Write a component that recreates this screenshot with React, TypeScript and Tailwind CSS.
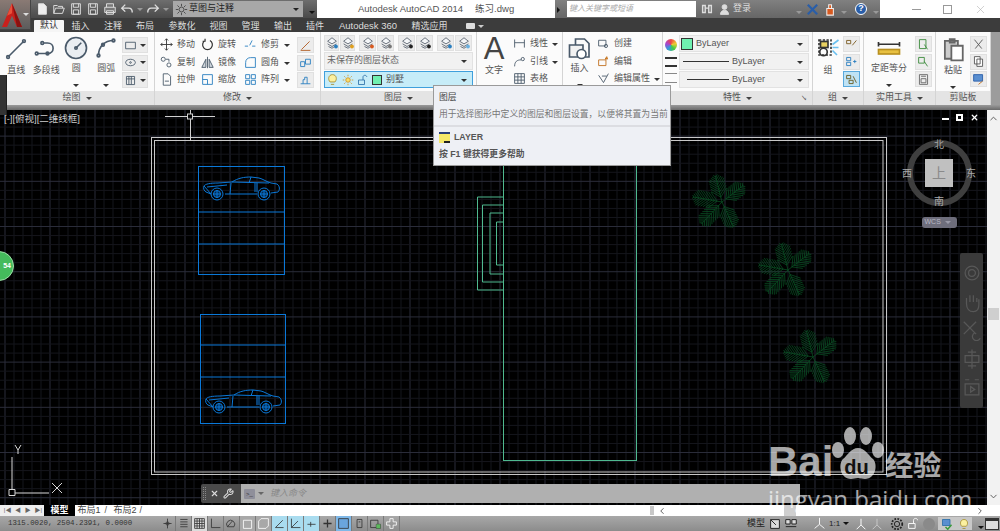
import type { ReactNode } from 'react';
import { ChevronDown, ChevronLeft, ChevronRight, ChevronUp, Wrench, X } from 'lucide-react';

// generic 16x16 line icon
function Ico({ children, s = 16, c = '#4a5a6a', w = 1.1 }: { children: ReactNode; s?: number; c?: string; w?: number }) {
  return (
    <svg width={s} height={s} viewBox="0 0 16 16" fill="none" stroke={c} strokeWidth={w} className="shrink-0">
      {children}
    </svg>
  );
}

function Caret({ c = 'border-t-[#333]' }: { c?: string }) {
  return <span className={`inline-block w-0 h-0 shrink-0 border-x-[3px] border-t-[3px] border-x-transparent ${c}`} />;
}

function Panel({ w, title, caret = true, corner, children }: { w: string; title: string; caret?: boolean; corner?: boolean; children: ReactNode }) {
  return (
    <div className={`${w} shrink-0 flex flex-col bg-[#fbfbfb] border-r border-[#d4d4d4]`}>
      <div className="h-[59px] flex">{children}</div>
      <div className="h-[14px] bg-[#e4e4e4] flex items-center justify-center gap-[5px] text-[9px] text-[#555] relative">
        {title}
        {caret && <Caret c="border-t-[#444]" />}
        {corner && <span className="absolute right-[5px] text-[6px] text-[#555]">↘</span>}
      </div>
    </div>
  );
}

function BigTool({ label, icon, w, caret }: { label: string; icon: ReactNode; w: string; caret?: boolean }) {
  return (
    <div className={`${w} flex flex-col items-center pt-[4px] text-[9px] text-[#555]`}>
      <div className="h-[26px] flex items-center justify-center">{icon}</div>
      <span className="leading-[13px] mt-[2px] whitespace-nowrap">{label}</span>
      {caret && <span className="mt-[3px]"><Caret /></span>}
    </div>
  );
}

function Row({ icon, label, caret, w }: { icon: ReactNode; label: string; caret?: boolean; w: string }) {
  return (
    <div className={`${w} h-[17.5px] flex items-center gap-[4px] text-[9px] text-[#555] whitespace-nowrap`}>
      {icon}
      <span>{label}</span>
      {caret && <span className="ml-auto mr-[2px]"><Caret /></span>}
    </div>
  );
}

function Sq({ children, on, caret, w = 'w-[17px]' }: { children: ReactNode; on?: boolean; caret?: boolean; w?: string }) {
  return (
    <div className={`${w} h-[16px] flex items-center justify-center gap-[3px] border ${on ? 'bg-[#bfe3f5] border-[#5aa9dc]' : 'bg-[#ececec] border-[#e0e0e0]'}`}>
      {children}
      {caret && <Caret />}
    </div>
  );
}

function Drop({ children, on, h = 'h-[17px]' }: { children: ReactNode; on?: boolean; h?: string }) {
  return (
    <div className={`${h} flex items-center pl-[1px] pr-[5px] gap-[3px] border text-[9px] text-[#555] ${on ? 'bg-[#c6ecf8] border-[#3f9fdc]' : 'bg-[#f1f1f1] border-[#e2e2e2]'}`}>
      {children}
      <span className="ml-auto"><Caret /></span>
    </div>
  );
}

// stacked sheets with a small marker, used by the layer tool row
const LayerIco = ({ accent = '#2a7fc0' }: { accent?: string }) => (
  <Ico s={14} c="#5a6470" w={1}>
    <path d="M3 6l5-4 5 4-5 3z" fill="#f4f6f8" />
    <path d="M3 9l5 3 5-3M4 12l4 2 3-2" />
    <circle cx="12.5" cy="12" r="2.2" fill={accent} stroke="none" />
  </Ico>
);

// feathered plant symbol from the drawing
function frondPath(cx: number, cy: number) {
  let d = '';
  for (const [deg, R] of [[-104, 27], [-38, 27], [65, 27], [133, 30], [190, 29]]) {
    const a = (deg * Math.PI) / 180;
    const ex = cx + R * Math.cos(a);
    const ey = cy + R * Math.sin(a);
    d += `M${cx} ${cy}L${ex.toFixed(1)} ${ey.toFixed(1)}`;
    for (let t = 5; t < R; t += 2.6) {
      const px = cx + t * Math.cos(a);
      const py = cy + t * Math.sin(a);
      const len = Math.min(11, (R - t) * 0.8 + 2);
      for (const side of [-0.8, 0.8]) {
        d += `M${px.toFixed(1)} ${py.toFixed(1)}L${(px + len * Math.cos(a + side)).toFixed(1)} ${(py + len * Math.sin(a + side)).toFixed(1)}`;
      }
    }
  }
  return d;
}

function Car({ x, y }: { x: number; y: number }) {
  return (
    <g transform={`translate(${x} ${y})`} stroke="#0a78d8" strokeWidth="1" fill="none">
      <path d="M1 9C2 7 7 6 15 6L29 5C35 1 41 0 48 0L56 1C60 2 64 5 68 6L74 7C77 9 77 13 75 15L68 16M54 17L22 17M8 17L3 15C1 14 0 11 1 9Z" />
      <path d="M29 5L66 6M28 6L27 17M48 0L46 6M52 6L52 15M54 6L54 15M4 10L24 8" />
      <circle cx="14" cy="17" r="6" />
      <circle cx="14" cy="17" r="3.5" fill="#052a50" />
      <circle cx="61" cy="17" r="6" />
      <circle cx="61" cy="17" r="3.5" fill="#052a50" />
      <path d="M14 13V21M10 17H18M61 13V21M57 17H65" />
    </g>
  );
}

function Canvas() {
  const minorX = Array.from({ length: 111 }, (_, i) => 5 + i * 9);
  const minorY = Array.from({ length: 46 }, (_, i) => 109 + i * 9.04);
  return (
    <svg viewBox="0 110 987 395" className="absolute inset-0 w-full h-full">
      {minorX.map((x, i) => (
        <line key={x} x1={x} x2={x} y1="110" y2="505" stroke={i % 5 === 0 ? '#2b2d3a' : '#15161c'} />
      ))}
      {minorY.map((y, i) => (
        <line key={y} y1={y} y2={y} x1="0" x2="987" stroke={(i - 1) % 5 === 2 ? '#2b2d3a' : '#15161c'} />
      ))}
      <rect x="151.5" y="137.5" width="735" height="337" fill="none" stroke="#c8c8c8" />
      <rect x="154.5" y="140.5" width="728.5" height="331.5" fill="none" stroke="#c8c8c8" />
      <g fill="none" stroke="#0a78d8">
        <rect x="198.5" y="166.5" width="86" height="108" />
        <path d="M199 212H285M199 244H285" />
        <rect x="200.5" y="314.5" width="85" height="109" />
        <path d="M200 345H286M200 377H286" />
      </g>
      <Car x={203} y={177} />
      <Car x={205} y={390} />
      <g fill="none" stroke="#4fb98f">
        <rect x="503.5" y="140" width="133" height="320.5" />
        <path d="M503 197H477.5V290H503M503 205H482.5V282H503M503 213H490V274H503M503 222H496.5V265H503" />
      </g>
      <g fill="none" stroke="#0a5224" strokeWidth="0.75">
        <path d={frondPath(722, 202)} />
        <path d={frondPath(788, 270)} />
        <path d={frondPath(813, 357)} />
      </g>
      {/* crosshair */}
      <path d="M165 116.5H187M193 116.5H215M190.5 110V114M190.5 119V141" stroke="#d0d0d0" fill="none" />
      <rect x="187.5" y="114" width="5" height="5" stroke="#d0d0d0" fill="none" />
      {/* UCS */}
      <path d="M12 457V490M15 493H49M9 489.5h6v6h-6zM15 445l3 5 3-5M18 450v4M52 483l10 10M62 483l-10 10" stroke="#d8d8d8" fill="none" />
    </svg>
  );
}

function Compass() {
  return (
    <div className="absolute left-[905px] top-[28px] w-[68px] flex flex-col items-center">
      <div className="relative w-[68px] h-[70px] flex items-center justify-center text-[#a8a8a8] text-[10px]">
        <div className="w-[65px] h-[66px] rounded-full border-[6px] border-[#3f3f3f] flex items-center justify-center">
          <div className="w-[28px] h-[28px] bg-[#c0c0c0] flex items-center justify-center text-[14px] text-[#8a8a8a]">上</div>
        </div>
        <span className="absolute top-[-1px]">北</span>
        <span className="absolute bottom-[-1px]">南</span>
        <span className="absolute left-[-3px]">西</span>
        <span className="absolute right-[-3px]">东</span>
      </div>
      <div className="mt-[9px] w-[35px] h-[11px] rounded-[3px] bg-[#6e6e7c] text-[7px] text-[#b8b8c4] flex items-center pl-[3px] gap-[4px]">
        WCS
        <Caret c="border-t-[#9a9aa8]" />
      </div>
    </div>
  );
}

function NavBar() {
  return (
    <div className="absolute left-[960px] top-[143px] w-[23px] h-[155px] rounded-[2px] bg-[#3a3a3a] flex flex-col items-center justify-around py-[6px]">
      {[
        <path key="a" d="M3 8a5 5 0 1 0 10 0a5 5 0 1 0-10 0M5.5 8a2.5 2.5 0 1 0 5 0a2.5 2.5 0 1 0-5 0" />,
        <path key="b" d="M4 9V5M6.5 8V3M9 8V3M11.5 8V5M4 9c0 4 2 6 5 6s4-2 4-5V6" />,
        <path key="c" d="M2 2l9 9M11 2L2 11M10 10a3 3 0 1 0 4 4" />,
        <path key="d" d="M8 1v14M3 5.5h10v5H3zM5 3h6M5 13h6" />,
        <path key="e" d="M3 5h10v8H3zM7 7l3 2-3 2zM3 2h3M10 2h3" />,
      ].map((p) => (
        <Ico key={p.key} s={22} c="#585858" w={0.9}>
          {p}
        </Ico>
      ))}
    </div>
  );
}

function Watermark() {
  return (
    <div className="absolute left-[768px] top-[424px] w-[180px] text-white/65 pointer-events-none font-['Liberation_Sans','Noto_Sans_CJK_SC',sans-serif]">
      <div className="flex items-end h-[57px]">
        <span className="text-[42px] leading-[38px] font-bold">Bai</span>
        <span className="relative w-[54px] h-[57px] shrink-0 -ml-[2px]">
          <svg viewBox="0 0 54 57" className="absolute inset-0 w-full h-full" fill="currentColor">
            <ellipse cx="19" cy="12" rx="6" ry="9" />
            <ellipse cx="35" cy="12" rx="6" ry="9" />
            <ellipse cx="7" cy="26" rx="6" ry="8" />
            <ellipse cx="47" cy="26" rx="6" ry="8" />
            <path d="M27 24c7 0 10 7 15 11c5 5 3 20-8 20c-3 0-4-1-7-1s-4 1-7 1c-11 0-13-15-8-20c5-4 8-11 15-11z" />
          </svg>
          <span className="absolute left-[13px] bottom-[4px] text-[20px] leading-[20px] font-bold text-[#111]">du</span>
        </span>
        <span className="text-[28px] leading-[34px] font-bold font-['Noto_Sans_CJK_SC',sans-serif]">经验</span>
      </div>
      <div className="text-[24px] leading-[26px] mt-[5px] whitespace-nowrap font-['Open_Sans',sans-serif]">jingyan.baidu.com</div>
    </div>
  );
}

function Tooltip() {
  return (
    <div className="absolute left-[433px] top-[85px] w-[238px] h-[81px] bg-[#eef0f5] border border-[#9a9a9a] text-[#555] z-10 text-[8.8px]">
      <div className="px-[5px] pt-[5px] h-[41px] border-b-2 border-[#dcdde2]">
        <div className="leading-[12px] text-[#444]">图层</div>
        <div className="leading-[12px] mt-[5px] text-[#777] whitespace-nowrap">用于选择图形中定义的图层和图层设置，以便将其置为当前</div>
      </div>
      <div className="px-[5px] pt-[4px]">
        <div className="flex items-center gap-[4px] font-bold leading-[12px]">
          <svg width="11" height="11" viewBox="0 0 11 11" className="shrink-0">
            <rect width="11" height="11" fill="#f6e96a" />
            <rect width="11" height="2" fill="#2a3f7a" />
            <rect y="9" x="5" width="6" height="2" fill="#222" />
          </svg>
          LAYER
        </div>
        <div className="font-bold leading-[12px] mt-[5px]">按 F1 键获得更多帮助</div>
      </div>
    </div>
  );
}

const statusIcons = [
  { d: 'M8 2v12M3 8h10M8 8m-2 0a2 2 0 1 0 4 0a2 2 0 1 0-4 0' },
  { d: 'M4 3h9M4 6h9M4 9h9M4 12h9' },
  { d: 'M2 2h12v12H2zM2 5h12M2 8h12M2 11h12M5 2v12M8 2v12M11 2v12', bg: 'bg-[#dcdcdc]' },
  { d: 'M3 2v11h11' },
  { d: 'M3 12a5 5 0 1 1 8 0zM9 5l-6 7' },
  { d: 'M3 4h10v10H3z', white: true, bg: 'bg-[#a8a8a8]' },
  { d: 'M5 2h9v9l-3 3H2V5z', white: true, bg: 'bg-[#a8a8a8]' },
  { d: 'M3 13L12 4M3 13h10', bg: 'bg-[#a9dcef]' },
  { d: 'M3 2v11h11M3 13l8-8', bg: 'bg-[#a9dcef]' },
  { d: 'M3 9h10M7 6v6', bg: 'bg-[#a9dcef]' },
  { d: 'M8 3v10M3 8h10', w: 1.6 },
  { d: 'M2 2h12v12H2z', bg: 'bg-[#7fb8e8]', fill: '#6aa5dd' },
  { d: 'M5 3h6v10H5zM7 6h2' },
  { d: 'M2 4h9v9H2zM9 9h5v5H9z', accent: true },
  { d: 'M6 2h4v4h4v4h-4v4H6v-4H2V6h4z', white: true },
];

export default function App() {
  return (
    <div className="relative w-full h-screen flex flex-col overflow-hidden bg-black font-['Liberation_Sans','Noto_Sans_CJK_SC',sans-serif]">
      {/* title bar */}
      <div className="h-[18px] flex shrink-0">
        <div className="w-[317px] pl-[35px] bg-gradient-to-b from-[#6e6e6e] to-[#4a4a4a] flex items-center gap-[3px]">
          <Ico s={14} c="#ddd"><path d="M4 2h6l3 3v9H4z" fill="#eee" /></Ico>
          <Ico s={14} c="#ddd"><path d="M2 13V4h4l1 1h5v2M2 13l2-6h10l-2 6z" /></Ico>
          <Ico s={14} c="#ddd"><path d="M3 2h10v12H3zM5 2v4h6V2M5 9h6v5H5z" /></Ico>
          <Ico s={14} c="#ddd"><path d="M3 2h10v12H3zM5 2v4h6V2M5 9h6v5H5z" /></Ico>
          <Ico s={14} c="#ddd"><path d="M4 6V2h8v4M2 6h12v6H2zM4 10h8v4H4z" fill="#777" /></Ico>
          <Ico s={14} c="#ddd" w={1.6}><path d="M6 3L2 7l4 4M2 7h8c3 0 4 2 4 5" /></Ico>
          <Caret c="border-t-[#999]" />
          <Ico s={14} c="#ddd" w={1.6}><path d="M10 3l4 4-4 4M14 7H6c-3 0-4 2-4 5" /></Ico>
          <Caret c="border-t-[#999]" />
          <div className="ml-[1px] w-[130px] h-[16px] bg-[#a8a8a8] flex items-center gap-[1px] pl-[2px] pr-[4px] text-[9px] text-[#222]">
            <Ico s={13} c="#444"><path d="M8 5a3 3 0 1 0 0 6a3 3 0 1 0 0-6M8 1v3M8 12v3M1 8h3M12 8h3M3 3l2 2M11 11l2 2M13 3l-2 2M5 11l-2 2" /></Ico>
            草图与注释
            <span className="ml-auto"><Caret c="border-t-[#222]" /></span>
          </div>
          <div className="ml-[3px]"><Caret c="border-t-[#111]" /></div>
        </div>
        <div className="w-[238px] bg-white flex items-center pl-[41px] gap-[12px] text-[9.5px] text-[#555] whitespace-nowrap">
          <span>Autodesk AutoCAD 2014</span>
          <span>练习.dwg</span>
        </div>
        <div className="flex-1 bg-gradient-to-b from-[#808080] to-[#666] flex items-center">
          <span className="ml-[2px]"><span className="inline-block w-0 h-0 border-y-[3px] border-l-[3px] border-y-transparent border-l-[#111] align-middle" /></span>
          <div className="ml-[7px] w-[129px] h-[16px] bg-white text-[8px] italic text-[#aaa] flex items-center pl-[2px]">键入关键字或短语</div>
          <span className="ml-[4px]"><Ico s={14} c="#ddd" w={1.6}><path d="M3 4h3v8H3zM10 4h3v8h-3zM6 7h4" /></Ico></span>
          <span className="ml-[4px]"><Ico s={13} c="#ddd"><path d="M8 2a3 3 0 1 0 0 6a3 3 0 1 0 0-6M3 14c0-3 2-5 5-5s5 2 5 5z" fill="#ddd" /></Ico></span>
          <span className="ml-[2px] text-[9px] text-[#ddd]">登录</span>
          <span className="ml-[45px]"><Caret c="border-t-[#999]" /></span>
          <span className="ml-[3px]"><Ico s={15} c="#2a5ea8" w={2.4}><path d="M3 3l10 10M13 3L3 13" /></Ico></span>
          <span className="ml-[4px]"><Ico s={15} c="#eee"><path d="M3 7h7v7H3zM5 7V3h3v4" fill="#d85a20" /></Ico></span>
          <span className="ml-[2px]"><Caret c="border-t-[#999]" /></span>
          <span className="ml-[8px] w-[12px] h-[12px] rounded-full bg-[#2a5ea8] border border-white text-white text-[9px] font-bold flex items-center justify-center">?</span>
          <span className="ml-[6px]"><Caret c="border-t-[#999]" /></span>
        </div>
        <div className="w-[120px] bg-white flex items-center text-[#aaa] text-[13px] pl-[32px] gap-[22px]">
          <span className="block w-[9px] h-px bg-[#999]" />
          <span className="block w-[9px] h-[9px] border border-[#999]" />
          <X size={13} strokeWidth={1} />
        </div>
      </div>

      {/* tabs */}
      <div className="h-[14px] shrink-0 bg-[#3c3c3c] flex pl-[34px] items-end text-[9px] text-[#ddd] whitespace-nowrap">
        <div className="w-[30px] h-[12px] bg-[#f5f5f5] text-[#333] flex items-center justify-center rounded-t-[1px]">默认</div>
        <div className="w-[33px] text-center leading-[12px]">插入</div>
        <div className="w-[32px] text-center leading-[12px]">注释</div>
        <div className="w-[32px] text-center leading-[12px]">布局</div>
        <div className="w-[42px] text-center leading-[12px]">参数化</div>
        <div className="w-[31px] text-center leading-[12px]">视图</div>
        <div className="w-[33px] text-center leading-[12px]">管理</div>
        <div className="w-[32px] text-center leading-[12px]">输出</div>
        <div className="w-[32px] text-center leading-[12px]">插件</div>
        <div className="w-[74px] text-center leading-[12px] text-[9.5px]">Autodesk 360</div>
        <div className="w-[49px] text-center leading-[12px]">精选应用</div>
        <div className="ml-[12px] h-[12px] flex items-center gap-[3px]">
          <span className="block w-[9px] h-[6px] bg-[#ddd] rounded-[1px]" />
          <Caret c="border-t-[#ccc]" />
        </div>
      </div>

      {/* ribbon */}
      <div className="h-[73px] shrink-0 flex bg-[#9c9c9c]">
        <Panel w="w-[155px]" title="绘图">
          <div className="flex pl-[2px] w-[122px]">
            <BigTool w="w-[29px]" label="直线" icon={<Ico s={24}><path d="M3 13L13 3" /><circle cx="2.7" cy="13.3" r=".9" /><circle cx="13.3" cy="2.7" r=".9" /></Ico>} />
            <BigTool w="w-[32px]" label="多段线" icon={<Ico s={24}><path d="M2 11h7c5 0 5-7 0-7H6" /><circle cx="1.8" cy="11" r=".9" /><circle cx="9" cy="11" r=".9" /><circle cx="5.5" cy="4" r=".9" /></Ico>} />
            <BigTool w="w-[29px]" caret label="圆" icon={<Ico s={24}><circle cx="8" cy="8" r="7" fill="#e9edf1" /><path d="M8 8l3.5-3.5" /><circle cx="8" cy="8" r=".8" /></Ico>} />
            <BigTool w="w-[32px]" caret label="圆弧" icon={<Ico s={24}><path d="M3 13C3 7 7 3 13 3" /><circle cx="3" cy="13" r=".9" /><circle cx="13" cy="3" r=".9" /><circle cx="6" cy="5.8" r=".9" /></Ico>} />
          </div>
          <div className="flex flex-col gap-[1.5px] pt-[5px]">
            <Sq w="w-[26px]" caret><Ico s={13}><path d="M2 4h12v8H2z" /></Ico></Sq>
            <Sq w="w-[26px]" caret><Ico s={13}><ellipse cx="8" cy="8" rx="6" ry="4" /><circle cx="8" cy="8" r="1" /></Ico></Sq>
            <Sq w="w-[26px]" caret><Ico s={13}><path d="M3 3h10v10H3zM3 6h10M6 3v10M9 3v10" /></Ico></Sq>
          </div>
        </Panel>
        <Panel w="w-[166px]" title="修改">
          <div className="flex flex-col pt-[4px] w-[43px] pl-[5px]">
            <Row w="w-[40px]" label="移动" icon={<Ico s={13} c="#333"><path d="M8 1v14M1 8h14M6 3l2-2 2 2M6 13l2 2 2-2M3 6L1 8l2 2M13 6l2 2-2 2" /></Ico>} />
            <Row w="w-[40px]" label="复制" icon={<Ico s={13}><circle cx="4" cy="4" r="2.5" /><circle cx="11" cy="11" r="2.5" /><path d="M7 4h4v3" /></Ico>} />
            <Row w="w-[40px]" label="拉伸" icon={<Ico s={13}><path d="M4 1h6l3 3v11H4zM6 10h5" /></Ico>} />
          </div>
          <div className="flex flex-col pt-[4px] w-[43px] pl-[3px]">
            <Row w="w-[40px]" label="旋转" icon={<Ico s={13} c="#333" w={1.5}><path d="M5 3a6 6 0 1 0 6 0M5 1v3H2" /></Ico>} />
            <Row w="w-[40px]" label="镜像" icon={<Ico s={13}><path d="M8 1v14M6 4L1 14h5zM10 4l5 10h-5z" fill="#cfd6dd" /></Ico>} />
            <Row w="w-[40px]" label="缩放" icon={<Ico s={13} c="#2a7fc0"><path d="M2 2h12v12H2z" /><path d="M2 8h6v6" /></Ico>} />
          </div>
          <div className="flex flex-col pt-[4px] w-[53px] pl-[3px]">
            <Row w="w-[48px]" caret label="修剪" icon={<Ico s={13} c="#2a7fc0"><path d="M1 10h4M7 9l3-6M10 10h4" /></Ico>} />
            <Row w="w-[48px]" caret label="圆角" icon={<Ico s={13} c="#2a7fc0"><path d="M2 14V8c0-4 3-6 6-6h6v12z" /></Ico>} />
            <Row w="w-[48px]" caret label="阵列" icon={<Ico s={13} c="#2a7fc0"><path d="M2 2h5v5H2zM9 2h5v5H9zM2 9h5v5H2zM9 9h5v5H9z" /></Ico>} />
          </div>
          <div className="flex flex-col gap-[1.5px] pt-[5px] ml-[3px]">
            <Sq><Ico s={13} c="#b05a20"><path d="M3 13L13 3M2 14h12" /></Ico></Sq>
            <Sq><Ico s={13} c="#2a7fc0"><path d="M2 7h5v6H2zM8 4h6v6H8z" /></Ico></Sq>
            <Sq><Ico s={13} c="#2a7fc0"><path d="M2 12h12M5 12V7h2V4h3v8" /></Ico></Sq>
          </div>
        </Panel>
        <Panel w="w-[156px]" title="图层">
          <div className="w-full px-[3px] pt-[3px] flex flex-col gap-[1px]">
            <div className="h-[16px] flex gap-[4px]">
              <div className="flex gap-px"><Sq w="w-[15px]"><LayerIco /></Sq><Sq w="w-[15px]"><LayerIco accent="#e0a020" /></Sq></div>
              <div className="flex gap-px"><Sq w="w-[17px]"><LayerIco accent="#d85a20" /></Sq><Sq w="w-[17px]"><LayerIco accent="#777" /></Sq></div>
              <div className="flex gap-px"><Sq w="w-[17px]"><LayerIco accent="#222" /></Sq><Sq w="w-[17px]"><LayerIco accent="#222" /></Sq></div>
              <div className="flex gap-px"><Sq w="w-[17px]"><LayerIco /></Sq><Sq w="w-[17px]"><LayerIco accent="#6ab0e0" /></Sq></div>
            </div>
            <Drop h="h-[18px]"><span className="ml-[1px] text-[9px] text-[#666]">未保存的图层状态</span></Drop>
            <Drop on h="h-[17px]">
              <Ico s={13} c="#a89030"><path d="M5 11c-3-3-2-9 3-9s6 6 3 9zM6 14h4" fill="#fbf0a0" /></Ico>
              <Ico s={12} c="#d09020"><circle cx="8" cy="8" r="3" fill="#f8e070" /><path d="M8 1v2M8 13v2M1 8h2M13 8h2M3 3l1.5 1.5M11.5 11.5L13 13M13 3l-1.5 1.5M3 13l1.5-1.5" /></Ico>
              <Ico s={12} c="#2a6fa8"><path d="M2 8h8v6H2zM8 8V4c0-3 5-3 5 0" /></Ico>
              <span className="w-[10px] h-[10px] bg-[#6ff0b0] border border-[#333] shrink-0" />
              <span className="ml-[1px] text-[#555]">别墅</span>
            </Drop>
          </div>
        </Panel>
        <Panel w="w-[86px]" title="注释">
          <BigTool w="w-[34px]" caret label="文字" icon={<span className="text-[31px] leading-[26px] text-[#444]">A</span>} />
          <div className="flex flex-col pt-[3px] pl-[2px]">
            <Row w="w-[44px]" caret label="线性" icon={<Ico s={13}><path d="M2 3v10M14 3v10M2 7h12" /></Ico>} />
            <Row w="w-[44px]" caret label="引线" icon={<Ico s={13}><path d="M2 14c0-6 3-8 8-8" /><circle cx="12" cy="5" r="2" /></Ico>} />
            <Row w="w-[44px]" label="表格" icon={<Ico s={13}><path d="M2 2h12v12H2zM2 6h12M2 10h12M6 2v12M10 2v12" /></Ico>} />
          </div>
        </Panel>
        <Panel w="w-[100px]" title="块">
          <BigTool w="w-[33px]" caret label="插入" icon={<Ico s={24}><path d="M5 6V2h6l3 3v9H9" /><path d="M1 6h9v8H1z" fill="#f2f2f2" /><circle cx="9" cy="12" r="3" fill="#fff" /></Ico>} />
          <div className="flex flex-col pt-[3px] pl-[1px]">
            <Row w="w-[60px]" label="创建" icon={<Ico s={13}><path d="M2 4h9v7H2z" /><circle cx="11" cy="11" r="2" /></Ico>} />
            <Row w="w-[60px]" label="编辑" icon={<Ico s={13} c="#c07020"><path d="M2 6h9v7H2z" /><path d="M12 2l1 3-3 0z" fill="#e09030" /></Ico>} />
            <Row w="w-[60px]" caret label="编辑属性" icon={<Ico s={13}><path d="M2 4l6 9 6-11M6 5h6" /></Ico>} />
          </div>
        </Panel>
        <Panel w="w-[150px]" title="特性" corner>
          <div className="flex flex-col w-[16px] pt-[7px] pl-[2px] gap-[6px]">
            <span className="block w-[12px] h-[12px] rounded-full bg-[conic-gradient(#e44,#ec3,#4c4,#39d,#a4c,#e44)]" />
            <span className="block w-[12px] h-[10px] border-y-2 border-[#333]" />
            <span className="block w-[12px] h-[10px] border-y border-[#888]" />
          </div>
          <div className="w-[130px] flex flex-col pt-[3px] gap-px">
            <Drop h="h-[17px]"><span className="w-[12px] h-[12px] bg-[#6ff0b0] border border-[#333] shrink-0" />ByLayer</Drop>
            <Drop h="h-[17px]"><span className="w-[46px] h-px bg-[#333] ml-[2px]" />ByLayer</Drop>
            <Drop h="h-[17px]"><span className="w-[42px] h-px bg-[#333] ml-[6px]" />ByLayer</Drop>
          </div>
        </Panel>
        <Panel w="w-[51px]" title="组">
          <BigTool w="w-[30px]" label="组" icon={<Ico s={24} c="#333"><path d="M2 2h8v10H2z" strokeDasharray="1.5 1" /><rect x="3" y="3" width="5" height="4" fill="#e8d060" /><circle cx="5" cy="10" r="2.5" /><path d="M11 5l4-3M11 7h4M11 9l3 3" stroke="#6ac0f0" /></Ico>} />
          <div className="flex flex-col gap-[1.5px] pt-[4px]">
            <Sq><Ico s={13} c="#7a5a20"><path d="M2 3h5v4H2zM9 9l5-6" /></Ico></Sq>
            <Sq><Ico s={13} c="#2a7fc0"><path d="M2 3h5v4H2zM2 9h5v4H2zM10 8h4M12 6v4" /></Ico></Sq>
            <Sq on><Ico s={13} c="#6a5a20"><path d="M2 3h5v4H2zM5 9h5v4H5zM10 4l4 8" /></Ico></Sq>
          </div>
        </Panel>
        <Panel w="w-[72px]" title="实用工具">
          <BigTool w="w-[50px]" caret label="定距等分" icon={<Ico s={24} c="#333"><path d="M1 4v3M15 4v3M1 5.5h14" /><rect x="1" y="9" width="14" height="3" fill="#e8c040" stroke="#b89020" /></Ico>} />
          <div className="flex flex-col gap-[1.5px] pt-[4px] ml-[1px]">
            <Sq><Ico s={13} c="#3a8a3a"><path d="M3 2h8v11H3zM9 8l4 6" /></Ico></Sq>
            <Sq><Ico s={13} c="#3a8a3a"><path d="M2 3h7v7H2zM9 8l4 6" /></Ico></Sq>
            <Sq><Ico s={13} c="#666"><path d="M3 2h10v12H3zM5 4h6M5 7h6v5H5z" /></Ico></Sq>
          </div>
        </Panel>
        <Panel w="w-[55px]" title="剪贴板" caret={false}>
          <BigTool w="w-[34px]" caret label="粘贴" icon={<Ico s={26} c="#666"><path d="M3 3h8v11H3z" fill="#ccc" /><path d="M6 2h3v2H6z" /><path d="M7 6h7v9H7z" fill="#fff" /></Ico>} />
          <div className="flex flex-col gap-[1.5px] pt-[4px]">
            <Sq><Ico s={13} c="#555"><path d="M3 2l9 11M13 2L4 13" /></Ico></Sq>
            <Sq><Ico s={13} c="#555"><path d="M3 2h7v9H3zM6 5h7v9H6z" fill="#fff" /></Ico></Sq>
            <Sq><Ico s={13} c="#2a5ea8"><path d="M2 2h11v8H2z" fill="#5a8fd0" /><path d="M8 14l5-4" stroke="#c07020" /></Ico></Sq>
          </div>
        </Panel>
      </div>
      <div className="h-[5px] shrink-0 bg-gradient-to-b from-[#9a9a9a] to-[#6a6a6a]" />

      {/* viewport */}
      <div className="flex-1 flex min-h-0">
        <div className="relative w-[987px] bg-black overflow-hidden">
          <Canvas />
          <div className="relative pl-[4px] pt-[3px] text-[9.5px] leading-[12px] text-[#ccc]">[-][俯视][二维线框]</div>
          <div className="absolute right-[8px] top-[3px] flex items-center gap-[7px] text-white">
            <span className="block w-[7px] h-[2px] bg-white mt-[3px]" />
            <span className="block w-[7px] h-[7px] border-2 border-white" />
            <X size={9} strokeWidth={3.5} />
          </div>
          <Compass />
          <NavBar />
          {/* command line */}
          <div className="absolute left-[201px] top-[374px] w-[599px] h-[19px] flex rounded-l-[2px] overflow-hidden text-[#8e8e8e]">
            <div className="w-[40px] bg-[#4a4a4a] flex items-center gap-[4px] pl-[2px] text-[#ddd]">
              <span className="w-[3px] h-[13px] border-x border-dotted border-[#888]" />
              <X size={9} strokeWidth={3} />
              <Wrench size={11} strokeWidth={2.2} />
            </div>
            <div className="flex-1 bg-[#b0b0b0] flex items-center pl-[3px] gap-[3px]">
              <span className="w-[11px] h-[10px] rounded-[1px] bg-[#8f8f9a] text-[6px] leading-[10px] text-[#333] text-center">&gt;_</span>
              <Caret c="border-t-[#666]" />
              <span className="ml-[3px] text-[9px] italic text-[#888]">键入命令</span>
            </div>
          </div>
        </div>
        <div className="w-[13px] bg-[#f2f2f2] flex flex-col items-center text-[#555]">
          <ChevronUp size={11} className="mt-[3px]" />
          <div className="w-[11px] h-[12px] bg-[#cfcfcf] mt-[184px]" />
          <ChevronDown size={11} className="mt-auto mb-[3px]" />
        </div>
      </div>

      {/* layout tabs + horizontal scroll */}
      <div className="h-[11px] shrink-0 bg-white flex items-center text-[#444] text-[9px] leading-[11px] whitespace-nowrap">
        <div className="w-[44px] flex items-center justify-around pl-[2px] bg-[#eee] h-full text-[#666] text-[6px]">
          <span>|◀</span><span>◀</span><span>▶</span><span>▶|</span>
        </div>
        <div className="w-[31px] bg-black text-white text-center h-full font-bold">模型</div>
        <div className="w-[33px] flex justify-end gap-[4px] pr-[1px]"><span>布局1</span><span className="text-[#555]">/</span></div>
        <div className="w-[35px] flex justify-end gap-[3px] pr-[1px]"><span>布局2</span><span className="text-[#555]">/</span></div>
        <div className="ml-[507px] w-[4px] h-[9px] bg-[#c8c8c8]" />
        <ChevronLeft size={10} className="ml-[3px]" />
        <div className="ml-[117px] w-[12px] h-full bg-[#cfcfcf]" />
        <ChevronRight size={10} className="ml-[179px]" />
      </div>

      {/* status bar */}
      <div className="h-[15px] shrink-0 bg-gradient-to-b from-[#a8a8a8] to-[#8c8c8c] flex items-center text-[#333] whitespace-nowrap">
        <span className="w-[160px] shrink-0 pl-[8px] text-[7.4px] font-['Liberation_Mono',monospace]">1315.0020, 2504.2391, 0.0000</span>
        {statusIcons.map((it, i) => (
          <span key={i} className={`w-[16px] h-[15px] shrink-0 flex items-center justify-center border-r border-[#7a7a7a] ${it.bg ?? ''}`}>
            <Ico s={13} c={it.white ? '#fff' : '#333'} w={it.w ?? 1}>
              <path d={it.d} fill={it.fill ?? 'none'} />
              {it.accent && <rect x="9" y="9" width="5" height="5" fill="#5cb85c" stroke="none" />}
            </Ico>
          </span>
        ))}
        <span className="ml-[347px] shrink-0 w-[18px] text-[9px] text-[#222]">模型</span>
        <span className="ml-[3px] flex gap-[2px] shrink-0">
          <Ico s={14} c="#222"><path d="M3 3h10v10H3z" fill="#ddd" /><path d="M3 3l6 6" /></Ico>
          <Ico s={14} c="#222"><path d="M2 3h5v5H2zM9 3h5v5H9zM2 11h12" fill="#ddd" /></Ico>
        </span>
        <span className="ml-[15px] flex items-center gap-[3px] text-[#222] text-[8px] shrink-0">
          <Ico s={13} c="#fff"><path d="M8 1v8M8 9l-6 5M8 9l6 5" /></Ico>
          1:1
          <Caret c="border-t-[#111]" />
        </span>
        <span className="ml-[5px] flex gap-[2px] shrink-0">
          <Ico s={14} c="#fff"><path d="M8 2v7L3 14M8 9l5 5" /></Ico>
          <Ico s={14} c="#c8c8c8"><path d="M8 2v7L3 14M8 9l5 5" /></Ico>
        </span>
        <span className="ml-[6px] flex items-center gap-[3px] shrink-0">
          <Ico s={14} c="#222"><circle cx="8" cy="8" r="3" /><circle cx="8" cy="8" r="6" strokeDasharray="2 1.5" strokeWidth="2" /></Ico>
          <Ico s={13} c="#fff"><path d="M2 8h8v6H2zM8 8V4c0-3 5-3 5 0" /></Ico>
          <span className="w-[12px] h-[12px] rounded-full bg-[#8a8a8a]" />
        </span>
        <span className="ml-[3px] w-[34px] h-[13px] bg-[#c8c8c8] flex items-center justify-around shrink-0">
          <Ico s={12} c="#2a6fa8"><path d="M2 2h10v8H2z" fill="#5a8fd0" /><path d="M6 12l3 3 5-6" stroke="#3a9a3a" strokeWidth="2" /></Ico>
          <Ico s={12} c="#a89030"><path d="M5 11c-3-3-2-9 3-9s6 6 3 9zM6 14h4" fill="#fbf0a0" /></Ico>
        </span>
        <span className="ml-[6px] shrink-0"><Caret c="border-t-[#111]" /></span>
        <span className="ml-[1px] w-[14px] h-[12px] shrink-0 border border-[#333] bg-[#ddd] border-t-[3px]" />
      </div>

      {/* app button, left side tab, badge and tooltip lie over the chrome */}
      <div className="absolute left-0 top-0 w-[31px] h-[30px] bg-gradient-to-b from-[#8a7a74] to-[#5c5c5c] flex items-center justify-center gap-[1px] border-r border-b border-[#444]">
        <svg width="20" height="24" viewBox="0 0 16 19" className="shrink-0">
          <path d="M8 0L0 19h4l4-9 4 9h4z" fill="#c8201c" />
          <path d="M8 0l4 19h4z" fill="#8a1210" />
          <path d="M8 0L4 10l4-2z" fill="#e8503a" />
        </svg>
        <Caret c="border-t-[#ddd]" />
      </div>
      <div className="absolute left-0 top-[75px] w-[7px] h-[40px] bg-[#333] border-r border-[#222]" />
      <div className="absolute left-[-16px] top-[251px] w-[30px] h-[30px] rounded-full bg-[#44bb5c] border border-[#9ee0a8] flex items-center justify-end pr-[2px] text-[7px] font-bold text-white">54</div>
      <Tooltip />
      <Watermark />
    </div>
  );
}
